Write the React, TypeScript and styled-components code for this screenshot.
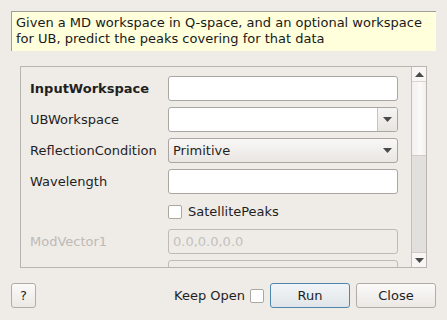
import styled, { createGlobalStyle } from 'styled-components'

const Global = createGlobalStyle`
  html, body {
    margin: 0;
    padding: 0;
    background: #efebe7;
  }
  * { box-sizing: border-box; }
`

const Dialog = styled.div`
  width: 447px;
  height: 320px;
  background: #efebe7;
  font-family: "DejaVu Sans", sans-serif;
  font-size: 13px;
  color: #1f1f1f;
  display: flex;
  flex-direction: column;
  overflow: hidden;
`

const Description = styled.div`
  margin: 11px 11px 0 11px;
  height: 40px;
  padding: 3px 0 0 4px;
  background: #ffffdc;
  border-top: 1px solid #a09e9b;
  border-left: 1px solid #a09e9b;
  line-height: 16px;
  color: #1a1a1a;
`

const ScrollFrame = styled.div`
  margin: 15px 20px 0 20px;
  height: 202px;
  border: 1px solid #b9b6b1;
  display: flex;
  overflow: hidden;
`

const FormArea = styled.div`
  flex: 1;
  padding: 9px 14px 0 9px;
  overflow: hidden;
`

const Form = styled.div`
  display: grid;
  grid-template-columns: 138px 230px;
  row-gap: 6px;
  align-items: center;
`

const Label = styled.div<{ $bold?: boolean; $disabled?: boolean }>`
  font-weight: ${(p) => (p.$bold ? 'bold' : 'normal')};
  color: ${(p) => (p.$disabled ? '#bdbab6' : '#1f1f1f')};
  white-space: nowrap;
`

const Field = styled.div<{ $disabled?: boolean }>`
  height: 25px;
  border: 1px solid ${(p) => (p.$disabled ? '#bebbb6' : '#aaa7a2')};
  border-radius: 3px;
  background: ${(p) => (p.$disabled ? '#efebe7' : '#ffffff')};
  color: #c4c1bd;
  padding: 0 4px;
  display: flex;
  align-items: center;
  overflow: hidden;
`

const Combo = styled.div<{ $editable?: boolean }>`
  height: 25px;
  border: 1px solid #aaa7a2;
  border-radius: 3px;
  background: ${(p) =>
    p.$editable ? '#ffffff' : 'linear-gradient(#f9f8f7, #e9e6e2)'};
  display: flex;
  align-items: stretch;
  overflow: hidden;
`

const ComboText = styled.div`
  flex: 1;
  padding-left: 4px;
  display: flex;
  align-items: center;
`

const ComboButton = styled.div<{ $separated?: boolean }>`
  width: 20px;
  display: flex;
  align-items: center;
  justify-content: center;
  border-left: ${(p) => (p.$separated ? '1px solid #c8c5c0' : 'none')};
  background: ${(p) => (p.$separated ? 'linear-gradient(#f6f5f3, #e8e5e1)' : 'transparent')};
`

const CheckRow = styled.div`
  grid-column: 2;
  height: 23px;
  display: flex;
  align-items: center;
  gap: 6px;
`

const Box = styled.div`
  width: 14px;
  height: 14px;
  border: 1px solid #aaa7a2;
  border-radius: 2px;
  background: #ffffff;
`

const ScrollBar = styled.div`
  width: 15px;
  border-left: 1px solid #c3c0bb;
  display: flex;
  flex-direction: column;
`

const ArrowButton = styled.div`
  height: 14px;
  background: #f7f6f5;
  display: flex;
  align-items: center;
  justify-content: center;
`

const Handle = styled.div`
  height: 75px;
  background: linear-gradient(90deg, #f2f0ee, #fbfaf9 60%, #f1efed);
  border-top: 1px solid #d9d6d2;
  border-bottom: 1px solid #d0cdc8;
`

const Groove = styled.div`
  flex: 1;
  background: #e2e0dd;
  border-bottom: 1px solid #cfccc7;
`

const Footer = styled.div`
  margin: 15px 11px 0 11px;
  display: flex;
  align-items: center;
  height: 25px;
`

const Button = styled.button<{ $default?: boolean; $w: number }>`
  width: ${(p) => p.$w}px;
  height: 25px;
  font-family: "DejaVu Sans", sans-serif;
  font-size: 13px;
  color: #1f1f1f;
  border: 1px solid ${(p) => (p.$default ? '#4f86ad' : '#b0ada8')};
  border-radius: 3px;
  background: ${(p) =>
    p.$default ? 'linear-gradient(#f2f5f7, #e0e5e9)' : 'linear-gradient(#fbfaf9, #ebe8e4)'};
  padding: 0;
`

const Spacer = styled.div`
  flex: 1;
`

const KeepOpen = styled.div`
  display: flex;
  align-items: center;
  gap: 5px;
  margin-right: 6px;
`

const Down = ({ color = '#4a4a4a' }: { color?: string }) => (
  <svg width="9" height="5" viewBox="0 0 9 5">
    <path d="M0 0 H9 L4.5 5 Z" fill={color} />
  </svg>
)

const Up = () => (
  <svg width="9" height="5" viewBox="0 0 9 5">
    <path d="M0 5 H9 L4.5 0 Z" fill="#4a4a4a" />
  </svg>
)

export default function App() {
  return (
    <Dialog>
      <Global />
      <Description>
        Given a MD workspace in Q-space, and an optional workspace for UB, predict the peaks covering for that data
      </Description>
      <ScrollFrame>
        <FormArea>
          <Form>
            <Label $bold>InputWorkspace</Label>
            <Field />
            <Label>UBWorkspace</Label>
            <Combo $editable>
              <ComboText />
              <ComboButton $separated>
                <Down />
              </ComboButton>
            </Combo>
            <Label>ReflectionCondition</Label>
            <Combo>
              <ComboText>Primitive</ComboText>
              <ComboButton>
                <Down />
              </ComboButton>
            </Combo>
            <Label>Wavelength</Label>
            <Field />
            <CheckRow>
              <Box />
              <span>SatellitePeaks</span>
            </CheckRow>
            <Label $disabled>ModVector1</Label>
            <Field $disabled>0.0,0.0,0.0</Field>
            <Label $disabled>ModVector2</Label>
            <Field $disabled>0.0,0.0,0.0</Field>
          </Form>
        </FormArea>
        <ScrollBar>
          <ArrowButton>
            <Up />
          </ArrowButton>
          <Handle />
          <Groove />
          <ArrowButton>
            <Down />
          </ArrowButton>
        </ScrollBar>
      </ScrollFrame>
      <Footer>
        <Button $w={25}>?</Button>
        <Spacer />
        <KeepOpen>
          <span>Keep Open</span>
          <Box />
        </KeepOpen>
        <Button $default $w={80}>Run</Button>
        <Button $w={80} style={{ marginLeft: 6 }}>Close</Button>
      </Footer>
    </Dialog>
  )
}
